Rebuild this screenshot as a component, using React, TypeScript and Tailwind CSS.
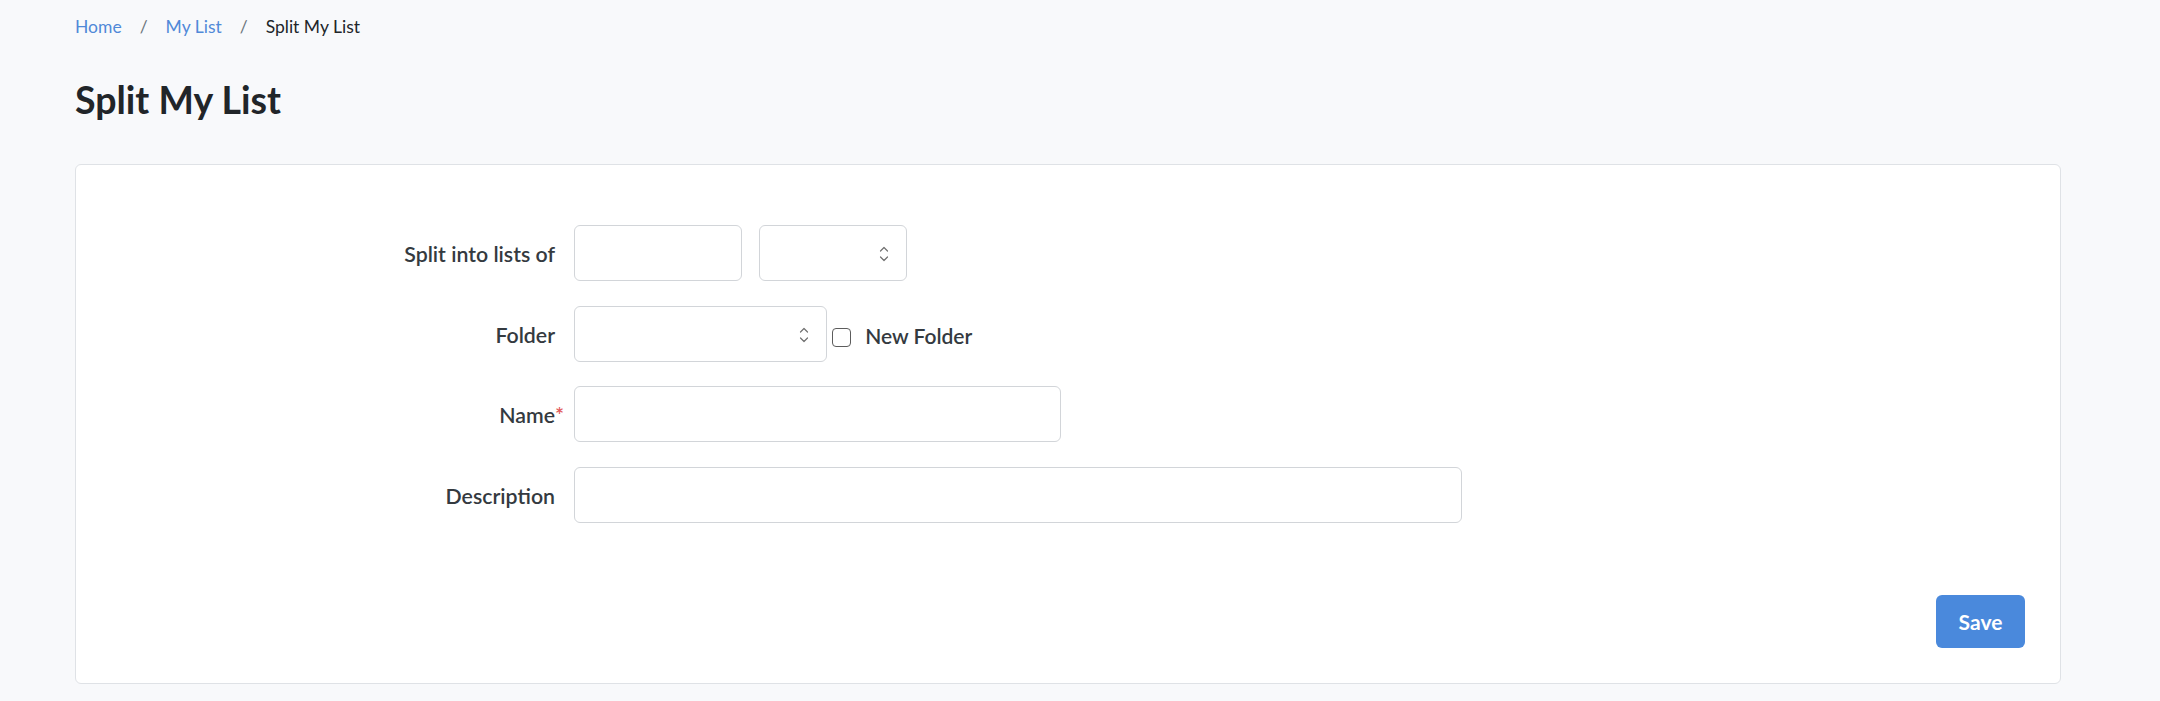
import React from 'react';

// up/down chevrons drawn like the native select arrow
function SelectArrows() {
    return (
        <svg
            width="10"
            height="18"
            viewBox="0 0 10 18"
            fill="none"
            stroke="#707070"
            strokeWidth="1.2"
            strokeLinecap="round"
            strokeLinejoin="round"
        >
            <path d="M1.5 6L5 2.5L8.5 6" />
            <path d="M1.5 12L5 15.5L8.5 12" />
        </svg>
    );
}

function SelectBox({ width }: { width: string }) {
    return (
        <div className={`relative h-[56px] ${width}`}>
            <select className="h-full w-full appearance-none rounded-[6px] border border-[#d2d5d9] bg-white px-3 outline-none">
                <option></option>
            </select>
            <span className="pointer-events-none absolute right-[18px] top-[20px]">
                <SelectArrows />
            </span>
        </div>
    );
}

const inputCls = 'h-[56px] rounded-[6px] border border-[#d2d5d9] bg-white px-3 outline-none';
const labelCls = 'relative w-[479px] pt-[4px] text-right text-[21.3px] font-semibold text-[#343a40]';

export default function App() {
    return (
        <div className="min-h-screen bg-[#f8f9fb] px-[75px] font-['Lato',sans-serif]">
            {/* breadcrumb */}
            <nav className="flex items-center pt-[13.5px] text-[17.5px] leading-[26px]">
                <a href="#" className="text-[#5089d8]">Home</a>
                <span className="px-[18px] text-[#6c757d]">/</span>
                <a href="#" className="text-[#5089d8]">My List</a>
                <span className="px-[18px] text-[#6c757d]">/</span>
                <span className="text-[#212529]">Split My List</span>
            </nav>

            <h1 className="mt-[38.5px] text-[37.5px] font-bold leading-[43px] text-[#212529]">Split My List</h1>

            <div className="mt-[43px] w-[1986px] rounded-[6px] border border-[#dfe2e6] bg-white pt-[60px] pb-[35px] pr-[35px]">
                <form className="flex flex-col gap-[24.7px]">
                    <div className="flex h-[56px] items-center">
                        <label className={labelCls}>Split into lists of</label>
                        <div className="ml-[18.6px] flex gap-[17.6px]">
                            <input type="text" className={`${inputCls} w-[168px]`} />
                            <SelectBox width="w-[148px]" />
                        </div>
                    </div>

                    <div className="flex h-[56px] items-center">
                        <label className={labelCls}>Folder</label>
                        <div className="ml-[18.6px] flex items-center">
                            <SelectBox width="w-[253px]" />
                            <input
                                type="checkbox"
                                className="ml-[5.6px] mt-[7px] h-[19px] w-[19px] appearance-none rounded-[4px] border-[1.5px] border-[#5c5c5c] bg-white"
                            />
                            <span className="ml-[14px] pt-[4px] text-[21px] font-semibold text-[#343a40]">New Folder</span>
                        </div>
                    </div>

                    <div className="flex h-[56px] items-center">
                        <label className={labelCls}>
                            Name
                            <span className="absolute -right-[9px] top-[4px] text-[#e25c5c]">*</span>
                        </label>
                        <input type="text" className={`${inputCls} ml-[18.6px] w-[487px]`} />
                    </div>

                    <div className="flex h-[56px] items-center">
                        <label className={labelCls}>Description</label>
                        <input type="text" className={`${inputCls} ml-[18.6px] w-[888px]`} />
                    </div>

                    <div className="mt-[47px] flex justify-end">
                        <button
                            type="button"
                            className="h-[53px] w-[89px] rounded-[6px] bg-[#4a89dc] text-[21px] font-bold text-white"
                        >
                            Save
                        </button>
                    </div>
                </form>
            </div>
        </div>
    );
}
